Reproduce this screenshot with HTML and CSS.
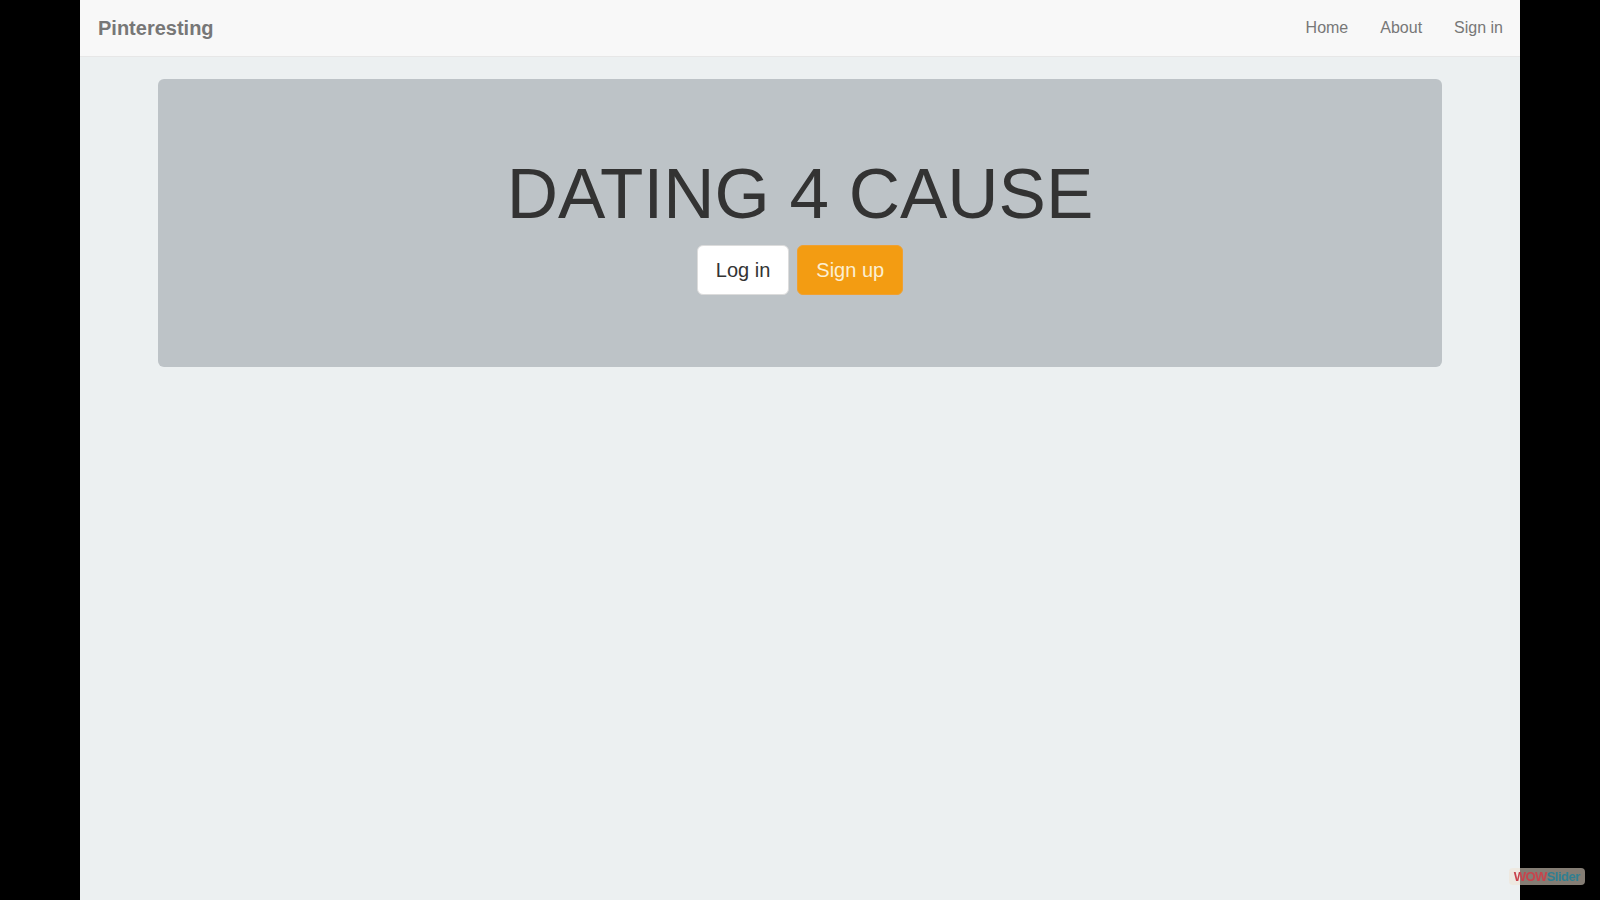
FILE: index.html
```html
<!DOCTYPE html>
<html lang="en">
<head>
<meta charset="utf-8">
<title>Pinteresting</title>
<link rel="stylesheet" href="styles.css">
</head>
<body>
<div class="page">
  <nav class="navbar">
    <a class="brand" href="#">Pinteresting</a>
    <ul class="nav-links">
      <li><a href="#">Home</a></li>
      <li><a href="#">About</a></li>
      <li><a href="#">Sign in</a></li>
    </ul>
  </nav>
  <main class="main">
    <section class="jumbotron">
      <h1 class="title">DATING 4 CAUSE</h1>
      <div class="actions">
        <a class="btn btn-default" href="#">Log in</a>
        <a class="btn btn-warning" href="#">Sign up</a>
      </div>
    </section>
  </main>
</div>
<a class="wow-badge" href="#"><span class="wow">WOW</span><span class="slider">Slider</span></a>
</body>
</html>
```

FILE: styles.css
```css
* { box-sizing: border-box; }
html, body { margin: 0; padding: 0; }
body {
  background: #000;
  font-family: "Liberation Sans", Arial, sans-serif;
  color: #333;
}
a { text-decoration: none; }
.page {
  width: 1440px;
  margin: 0 auto;
  min-height: 100vh;
  background: #ecf0f1;
}
.navbar {
  display: flex;
  align-items: center;
  justify-content: space-between;
  height: 57px;
  background: #f8f8f8;
  border-bottom: 1px solid #e7e7e7;
  padding: 0 1px 1px 18px;
}
.brand {
  font-size: 20px;
  font-weight: bold;
  color: #777;
  line-height: 56px;
}
.nav-links {
  display: flex;
  list-style: none;
  margin: 0;
  padding: 0;
}
.nav-links a {
  display: block;
  padding: 1px 16px 0;
  font-size: 16px;
  line-height: 56px;
  color: #777;
}
.main {
  padding: 22px 78px 0;
}
.jumbotron {
  background: #bdc3c7;
  border-radius: 6px;
  padding: 75px 0 72px;
  text-align: center;
}
.title {
  margin: 0 0 12px;
  font-size: 71px;
  line-height: 79px;
  font-weight: normal;
  color: #333;
}
.actions {
  display: flex;
  justify-content: center;
  gap: 8px;
}
.btn {
  display: inline-block;
  font-size: 20px;
  line-height: 28px;
  padding: 10px 18px;
  border: 1px solid transparent;
  border-radius: 6px;
}
.btn-default {
  background: #fff;
  color: #333;
  border-color: #dcdcdc;
}
.btn-warning {
  background: #f39c12;
  border-color: #f0a030;
  color: #fcefd2;
}
.wow-badge {
  position: fixed;
  right: 15px;
  bottom: 15px;
  padding: 1px 5px;
  border-radius: 4px;
  background: rgba(240, 228, 212, 0.55);
  font-family: "Liberation Sans", sans-serif;
  font-weight: bold;
  font-size: 13px;
  line-height: 15px;
  letter-spacing: -0.5px;
}
.wow { color: #c8434d; }
.slider { color: #2f7f90; }
```
